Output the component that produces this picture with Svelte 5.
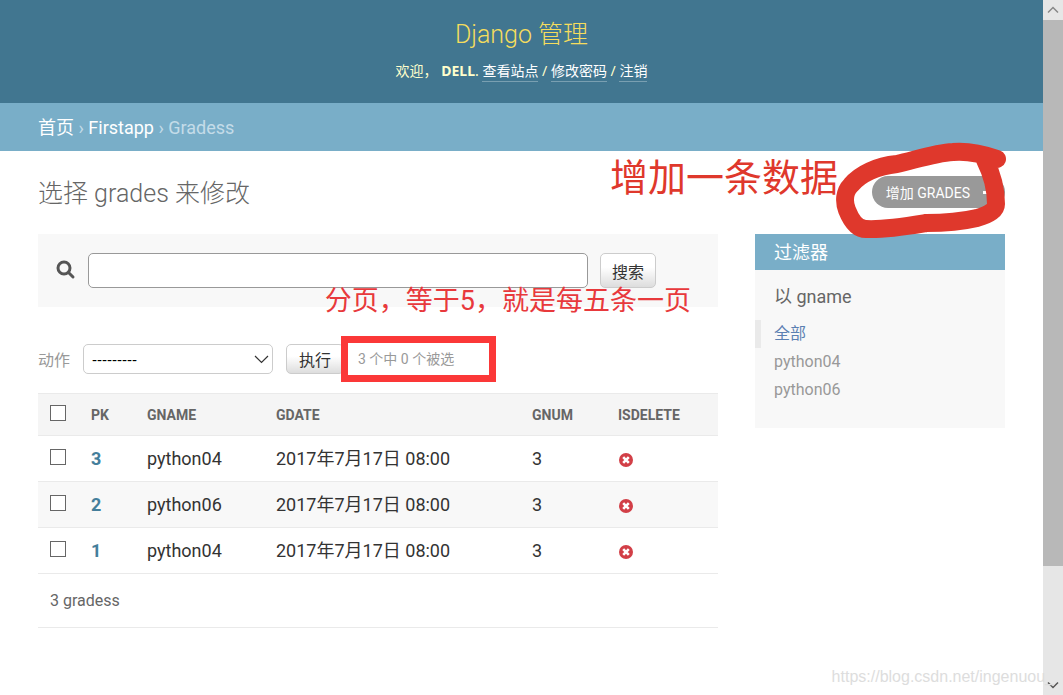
<script lang="ts">
	const columns = ['PK', 'GNAME', 'GDATE', 'GNUM', 'ISDELETE'];
	const filters = ['全部', 'python04', 'python06'];

	const grades = [
		{ pk: 3, name: 'python04', date: '2017年7月17日 08:00', num: 3 },
		{ pk: 2, name: 'python06', date: '2017年7月17日 08:00', num: 3 },
		{ pk: 1, name: 'python04', date: '2017年7月17日 08:00', num: 3 }
	];

	let query = '';
	let action = '';
	let activeFilter = '全部';
	let selected: number[] = [];

	$: allSelected = selected.length === grades.length;

	function toggleAll() {
		selected = allSelected ? [] : grades.map((grade) => grade.pk);
	}
</script>

<div class="window">
	<div class="page">
		<header>
			<h1><a href="#home">Django 管理</a></h1>
			<div class="user-tools">
				欢迎， <strong>DELL</strong>.
				<a href="#site">查看站点</a> / <a href="#password">修改密码</a> / <a href="#logout">注销</a>
			</div>
		</header>

		<nav class="breadcrumbs">
			<a href="#home">首页</a> › <a href="#firstapp">Firstapp</a> › Gradess
		</nav>

		<main>
			<div class="title-row">
				<h2>选择 grades 来修改</h2>
				<a class="add-link" href="#add">
					增加 GRADES
					<svg width="13" height="13" viewBox="0 0 13 13" aria-hidden="true">
						<path d="M6.5 1v11M1 6.5h11" stroke="#fff" stroke-width="3" />
					</svg>
				</a>
				<span class="note note-add">增加一条数据</span>
				<svg class="scribble" width="172" height="98" viewBox="0 0 172 98" aria-hidden="true">
					<path
						d="M162 17C145 11 130 9 118 10C100 11 80 18 62 22C42 24 25 32 16 43C9 50 9 60 12 68C16 78 22 87 31 87C50 88 73 84 91 81C110 81 125 80 142 76C155 72 161 68 161 62C161 45 156 30 150 18"
						fill="none"
						stroke="#df382c"
						stroke-width="18"
						stroke-linecap="round"
						stroke-linejoin="round"
					/>
				</svg>
			</div>

			<div class="content">
				<section class="changelist">
					<form class="search" on:submit|preventDefault>
						<label for="searchbar" aria-label="搜索">
							<svg width="20" height="20" viewBox="0 0 20 20" aria-hidden="true">
								<circle cx="8" cy="8" r="6" fill="none" stroke="#555" stroke-width="3" />
								<path d="M12.5 12.5l4.5 4.5" stroke="#555" stroke-width="3" stroke-linecap="round" />
							</svg>
						</label>
						<input id="searchbar" type="text" bind:value={query} />
						<button type="submit">搜索</button>
						<span class="note note-page">分页，等于5，就是每五条一页</span>
					</form>

					<div class="actions">
						<label for="action">动作</label>
						<div class="select">
							<select id="action" bind:value={action}>
								<option value="">---------</option>
							</select>
							<svg width="15" height="9" viewBox="0 0 15 9" aria-hidden="true">
								<path d="M1 1l6.5 6.5L14 1" fill="none" stroke="#333" stroke-width="1.2" />
							</svg>
						</div>
						<button type="button">执行</button>
						<span class="counter">{grades.length} 个中 {selected.length} 个被选</span>
					</div>

					<table>
						<colgroup>
							<col class="col-check" />
							<col class="col-pk" />
							<col class="col-name" />
							<col />
							<col class="col-num" />
							<col class="col-delete" />
						</colgroup>
						<thead>
							<tr>
								<th>
									<input type="checkbox" aria-label="全选" checked={allSelected} on:change={toggleAll} />
								</th>
								{#each columns as column}
									<th>{column}</th>
								{/each}
							</tr>
						</thead>
						<tbody>
							{#each grades as grade (grade.pk)}
								<tr>
									<td>
										<input
											type="checkbox"
											aria-label="选择 {grade.pk}"
											value={grade.pk}
											bind:group={selected}
										/>
									</td>
									<td><a href="#grade-{grade.pk}">{grade.pk}</a></td>
									<td>{grade.name}</td>
									<td>{grade.date}</td>
									<td>{grade.num}</td>
									<td>
										<svg class="no" width="15" height="14" viewBox="0 0 15 14" role="img" aria-label="False">
											<circle cx="8" cy="7" r="7" fill="#d23f47" />
											<path d="M5.2 4.2l5.600 5.600M10.800 4.200l-5.600 5.600" stroke="#fff" stroke-width="2.6" />
										</svg>
									</td>
								</tr>
							{/each}
						</tbody>
					</table>
					<p class="paginator">{grades.length} gradess</p>
				</section>

				<aside>
					<h2>过滤器</h2>
					<h3>以 gname</h3>
					<ul>
						{#each filters as filter}
							<li class:selected={filter === activeFilter}>
								<a href="#{filter}" on:click|preventDefault={() => (activeFilter = filter)}>{filter}</a>
							</li>
						{/each}
					</ul>
				</aside>
			</div>
		</main>
	</div>

	<div class="scrollbar" aria-hidden="true">
		<svg width="12" height="20" viewBox="0 0 12 20">
			<path d="M1 12.500l5-5 5 5" fill="none" stroke="#888" stroke-width="1.500" />
		</svg>
		<div class="thumb"></div>
		<svg width="12" height="20" viewBox="0 0 12 20">
			<path d="M1 7.500l5 5 5-5" fill="none" stroke="#555" stroke-width="1.500" />
		</svg>
	</div>
	<span class="watermark">https://blog.csdn.net/ingenuou_</span>
</div>

<style>
	:global(body) {
		margin: 0;
		background: #fff;
		color: #333;
		font-family: Roboto, 'Noto Sans CJK SC', sans-serif;
		font-size: 16px;
	}

	* {
		box-sizing: border-box;
	}

	a {
		color: #447e9b;
		text-decoration: none;
	}

	h1,
	h2,
	h3,
	p,
	ul {
		margin: 0;
		padding: 0;
		font-weight: 300;
	}

	.window {
		position: relative;
		display: grid;
		grid-template-columns: 1fr 20px;
		min-height: 100vh;
	}

	header {
		display: flex;
		flex-direction: column;
		align-items: center;
		gap: 8px;
		height: 103px;
		padding-top: 18px;
		background: #417690;
		color: #ffc;
	}

	h1 {
		font-size: 25px;
		line-height: 34px;
	}

	h1 a {
		color: #f5dd5d;
	}

	.user-tools {
		font-family: 'Noto Sans', 'Noto Sans CJK SC', sans-serif;
		font-size: 14px;
		line-height: 22px;
	}

	.user-tools a {
		padding-bottom: 1px;
		border-bottom: 1px solid #799fb1;
		color: #fff;
	}

	.breadcrumbs {
		padding: 1px 38px 0;
		background: #79aec8;
		color: #c4dce8;
		font-size: 18px;
		line-height: 47px;
	}

	.breadcrumbs a {
		color: #fff;
	}

	main {
		padding: 25px 38px 32px;
	}

	.title-row {
		position: relative;
		display: flex;
		justify-content: space-between;
		align-items: flex-start;
		height: 58px;
	}

	.title-row h2 {
		color: #666;
		font-size: 25px;
		line-height: 36px;
	}

	.add-link {
		display: flex;
		align-items: center;
		gap: 12px;
		height: 32px;
		padding: 0 10px 0 14px;
		border-radius: 16px;
		background: #999;
		color: #fff;
		font-size: 14px;
	}

	.note {
		position: absolute;
		color: #e8393c;
		white-space: nowrap;
	}

	.note-add {
		top: -26px;
		right: 167px;
		color: #df382c;
		font-size: 38px;
		line-height: 56px;
	}

	.note-page {
		top: 47px;
		right: 27px;
		font-size: 27px;
		line-height: 40px;
	}

	.scribble {
		position: absolute;
		top: -34px;
		right: -2px;
	}

	.content {
		display: grid;
		grid-template-columns: 1fr 250px;
		gap: 37px;
		align-items: start;
	}

	.search {
		position: relative;
		display: flex;
		align-items: center;
		padding: 19px 62px 19px 18px;
		background: #f8f8f8;
	}

	.search label {
		display: flex;
		margin: 0 12px 2px 0;
	}

	.search input {
		flex: 1;
		min-width: 0;
		height: 35px;
		margin-right: 12px;
		padding: 4px 8px;
		border: 1px solid #999;
		border-radius: 5px;
		background: #fff;
		font: inherit;
	}

	button {
		height: 35px;
		padding: 0 11px;
		border: 1px solid #ccc;
		border-radius: 5px;
		background: linear-gradient(#fff, #fff 40%, #ddd);
		color: #333;
		font-family: inherit;
		font-size: 16px;
	}

	.actions {
		display: flex;
		align-items: center;
		height: 86px;
		padding-top: 18px;
		color: #999;
	}

	.actions label {
		margin-right: 13px;
	}

	.actions button {
		height: 30px;
		padding: 0 12px;
	}

	.select {
		display: grid;
		align-items: center;
		width: 190px;
		margin-right: 13px;
	}

	.select > * {
		grid-area: 1 / 1;
	}

	.select svg {
		justify-self: end;
		margin-right: 4px;
		pointer-events: none;
	}

	select {
		width: 100%;
		height: 30px;
		padding: 0 8px;
		appearance: none;
		border: 1px solid #ccc;
		border-radius: 5px;
		background: #fff;
		color: #000;
		font-family: 'Liberation Sans', sans-serif;
		font-size: 15px;
	}

	.counter {
		position: relative;
		width: 155px;
		margin-left: -3px;
		padding-left: 10px;
		border: 7px solid #fb3838;
		background: #fff;
		font-size: 14px;
		line-height: 32px;
	}

	table {
		width: 100%;
		table-layout: fixed;
		border-collapse: collapse;
	}

	.col-check {
		width: 41px;
	}

	.col-pk {
		width: 56px;
	}

	.col-name {
		width: 129px;
	}

	.col-num {
		width: 86px;
	}

	.col-delete {
		width: 112px;
	}

	th,
	td {
		padding: 0 12px;
		border-bottom: 1px solid #eaeaea;
		text-align: left;
		line-height: 20px;
		white-space: nowrap;
	}

	th {
		height: 42px;
		border-top: 1px solid #eaeaea;
		background: #f5f5f5;
		color: #666;
		font-size: 14px;
		font-weight: 700;
	}

	td {
		height: 46px;
		font-size: 18px;
	}

	td a {
		font-weight: 700;
	}

	tbody tr:nth-child(even) {
		background: #f8f8f8;
	}

	input[type='checkbox'] {
		display: block;
		width: 16px;
		height: 16px;
		margin: 0 0 4px;
		appearance: none;
		border: 1px solid #666;
		background: #fff;
	}

	input[type='checkbox']:checked {
		background: #447e9b;
	}

	.no {
		display: block;
		margin-top: 3px;
	}

	.paginator {
		padding: 0 12px;
		border-bottom: 1px solid #eaeaea;
		color: #666;
		font-weight: 400;
		line-height: 53px;
	}

	aside {
		padding-bottom: 24px;
		background: #f8f8f8;
	}

	aside h2 {
		padding: 1px 19px 0;
		background: #79aec8;
		color: #fff;
		font-size: 18px;
		font-weight: 400;
		line-height: 35px;
	}

	aside h3 {
		padding: 14px 19px 10px;
		color: #666;
		font-size: 18px;
		font-weight: 400;
		line-height: 26px;
	}

	ul {
		list-style: none;
	}

	li {
		padding-left: 19px;
		font-weight: 400;
		line-height: 28px;
	}

	li a {
		color: #999;
	}

	li.selected {
		padding-left: 13px;
		border-left: 6px solid #eaeaea;
	}

	li.selected a {
		color: #5b80b2;
	}

	.scrollbar {
		display: flex;
		flex-direction: column;
		align-items: center;
		background: #e6e6e6;
	}

	.thumb {
		width: 100%;
		height: 546px;
		margin-bottom: auto;
		background: #b8b8b8;
	}

	.watermark {
		position: absolute;
		right: 9px;
		bottom: 8px;
		color: #ddd;
		font-family: 'Liberation Sans', sans-serif;
		font-size: 16px;
		line-height: 20px;
	}
</style>
